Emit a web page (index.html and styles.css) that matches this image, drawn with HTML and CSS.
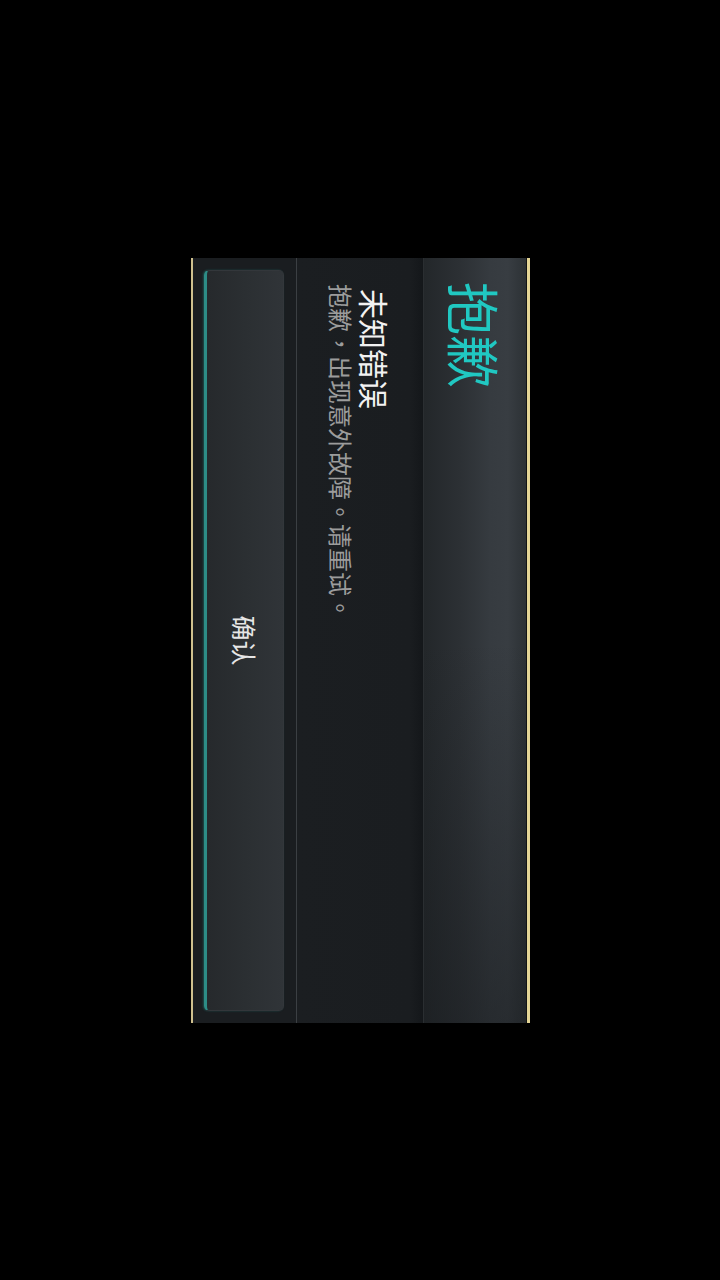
FILE: index.html
```html
<!DOCTYPE html>
<html lang="zh-CN">
<head>
<meta charset="utf-8">
<title>抱歉</title>
<link rel="stylesheet" href="styles.css">
</head>
<body>
<div class="stage">
  <div class="dialog">
    <div class="dlg-title">抱歉</div>
    <div class="dlg-content">
      <div class="msg-title">未知错误</div>
      <div class="msg-body" lang="zh-TW">抱歉，出现意外故障。请重试。</div>
    </div>
    <div class="dlg-actions">
      <div class="btn">确认</div>
    </div>
  </div>
</div>
</body>
</html>
```
FILE: styles.css
```css
html, body {
  margin: 0;
  padding: 0;
  width: 720px;
  height: 1280px;
  background: #000;
  overflow: hidden;
}
.stage {
  width: 720px;
  height: 1280px;
  display: flex;
  align-items: center;
  justify-content: center;
}
.dialog {
  flex: 0 0 765px;
  width: 765px;
  height: 339px;
  box-sizing: border-box;
  transform: rotate(90deg);
  display: flex;
  flex-direction: column;
  background: #1b1e21;
  border-top: 3px solid #e4d596;
  border-bottom: 2px solid #cfc08e;
  font-family: "Noto Sans CJK SC", "Noto Sans", sans-serif;
  text-spacing-trim: space-all;
  font-kerning: none;
}
.dlg-title {
  height: 103px;
  flex: 0 0 103px;
  box-sizing: border-box;
  display: flex;
  align-items: center;
  padding-left: 24px;
  font-size: 53px;
  line-height: 54px;
  font-weight: 400;
  color: #20c8c2;
  border-top: 1px solid #111315;
  background:
    linear-gradient(90deg, rgba(24,27,30,0) 0%, rgba(24,27,30,0) 50%, rgba(24,27,30,0.5) 100%),
    linear-gradient(180deg, #2c3135 0%, #383d42 18%, #363b40 35%, #2c3034 65%, #23272a 100%);
}
.dlg-content {
  flex: 0 0 127px;
  height: 127px;
  box-sizing: border-box;
  padding: 32px 0 0 0;
  background: linear-gradient(180deg, #14171a 0px, #1a1d20 14px, #1b1e21 100%);
  border-top: 1px solid #2a2e31;
}
.msg-title {
  padding-left: 31px;
  font-size: 30px;
  line-height: 32px;
  color: #f2f2f2;
}
.msg-body {
  margin-top: 4px;
  padding-left: 26px;
  font-family: "Noto Sans CJK TC", "Noto Sans CJK SC", sans-serif;
  font-size: 24px;
  line-height: 28px;
  color: #9c9c9c;
}
.dlg-actions {
  flex: 1 1 auto;
  box-sizing: border-box;
  padding: 12px 12px 11px 12px;
  border-top: 1px solid #3b3f43;
  background: #1a1d20;
  display: flex;
}
.btn {
  flex: 1 1 auto;
  display: flex;
  align-items: center;
  justify-content: center;
  border-radius: 5px;
  border: 1px solid #33373b;
  border-bottom: 3px solid #2d8c86;
  background: linear-gradient(180deg, #303438 0%, #2b2f32 50%, #26292c 100%);
  box-shadow: 0 1px 2px rgba(40,170,160,0.35);
  color: #e6e6e6;
  font-size: 25px;
  line-height: 26px;
}
```
